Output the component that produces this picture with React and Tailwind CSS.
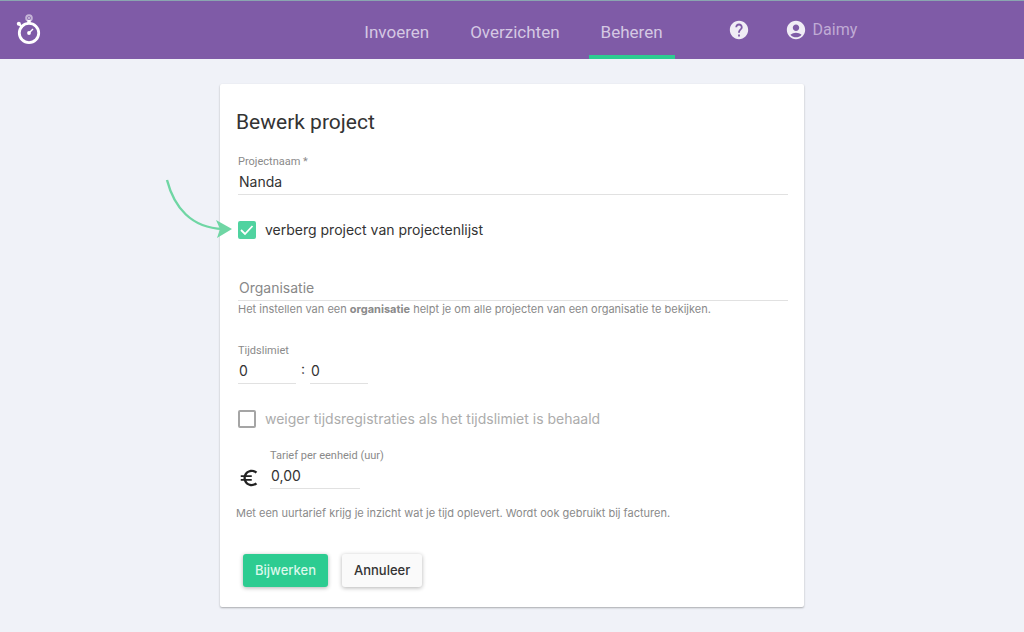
import { useState } from 'react';
import { MdAccountCircle, MdEuroSymbol, MdHelp } from 'react-icons/md';

const navItems = [
  { label: 'Invoeren', active: false },
  { label: 'Overzichten', active: false },
  { label: 'Beheren', active: true },
];

function Logo() {
  return (
    <svg width="26" height="32" viewBox="0 0 26 32" fill="none" aria-hidden="true">
      <circle cx="13" cy="4" r="2.8" stroke="#fff" strokeOpacity="0.55" strokeWidth="2" />
      <circle cx="13" cy="4" r="1" fill="#fff" fillOpacity="0.7" />
      <path d="M13 6v4" stroke="#fff" strokeWidth="3.4" />
      <path d="M3.5 10.5l3 3" stroke="#fff" strokeWidth="2.4" />
      <circle cx="2.800" cy="9.800" r="2" fill="#fff" />
      <circle cx="13" cy="19" r="9.700" stroke="#fff" strokeWidth="2.800" />
      <circle cx="13" cy="19" r="1.900" fill="#fff" />
      <path d="M13 19l4-4" stroke="#fff" strokeWidth="1.500" />
    </svg>
  );
}

function Header() {
  return (
    <header className="flex h-[59px] items-stretch border-t border-[#8aa5b0] bg-[#7f5ba7] font-['Roboto',sans-serif] text-[17px] text-[#d5c8e3]">
      <div className="flex w-1/3 shrink-0 items-center pl-4">
        <a href="#home" aria-label="Home">
          <Logo />
        </a>
      </div>
      <nav className="flex gap-[17px] pl-[11px]">
        {navItems.map((item) => (
          <a
            key={item.label}
            href={`#${item.label.toLowerCase()}`}
            className={`flex items-center border-b-4 px-3 pt-2.5 ${
              item.active ? 'border-[#2dcc91]' : 'border-transparent'
            }`}
          >
            {item.label}
          </a>
        ))}
      </nav>
      <div className="flex items-center gap-[35px] pl-[53px]">
        <a href="#help" aria-label="Help">
          <MdHelp size={22} className="text-[#f0ecf5]" />
        </a>
        <a href="#account" className="flex items-center gap-1.5 text-base text-[#c0abd5]">
          <MdAccountCircle size={22} className="text-[#f0ecf5]" />
          Daimy
        </a>
      </div>
    </header>
  );
}

// Curved pointer towards the "hide project" checkbox
function Arrow() {
  return (
    <svg
      width="70"
      height="62"
      viewBox="0 0 70 62"
      fill="none"
      aria-hidden="true"
      className="absolute -left-[74px] -top-[42px]"
    >
      <path d="M3 2C10 29 27 50 59 51" stroke="#6fd6a4" strokeWidth="2.4" />
      <path d="M68 51L52 42l4 9-3 9z" fill="#6fd6a4" />
    </svg>
  );
}

function Checkbox({ id, label, checked, onChange, disabled }) {
  return (
    <div className="flex h-5 items-center gap-[9px]">
      <span className="relative flex size-[18px]">
        <input
          id={id}
          type="checkbox"
          checked={checked}
          onChange={onChange}
          disabled={disabled}
          className="size-[18px] appearance-none rounded-xs border-2 border-[#a5a5a5] checked:border-[#50d3a0] checked:bg-[#50d3a0]"
        />
        {checked && (
          <svg width="18" height="18" viewBox="0 0 18 18" fill="none" className="pointer-events-none absolute inset-0">
            <path d="M3 9l4 4 7.500-8" stroke="#fff" strokeWidth="1.8" />
          </svg>
        )}
      </span>
      <label htmlFor={id} className={`text-sm leading-5 ${disabled ? 'text-[#acacac]' : 'text-[#333]'}`}>
        {label}
      </label>
    </div>
  );
}

const inputClass =
  'h-[25px] border-b border-[#e1e1e1] bg-transparent px-px pb-0.5 text-sm text-[#333] outline-none placeholder:text-[#888]';
const labelClass = "font-['Roboto',sans-serif] text-[11px] leading-4 text-[#8a8a8a]";
const helpClass = 'text-[11px] leading-4 text-[#8a8a8a]';

export default function App() {
  const [name, setName] = useState('Nanda');
  const [hidden, setHidden] = useState(true);
  const [organisation, setOrganisation] = useState('');
  const [hours, setHours] = useState('0');
  const [minutes, setMinutes] = useState('0');
  const [rate, setRate] = useState('0,00');

  return (
    <div className="min-h-screen bg-[#f0f2f8] font-['Inter',sans-serif]">
      <Header />

      <main className="px-4 pt-[25px] pb-6">
        <form
          onSubmit={(e) => e.preventDefault()}
          className="mx-auto max-w-[584px] rounded-xs bg-white px-4 pt-6 pb-5 shadow-[0_1px_2px_rgba(0,0,0,0.3)]"
        >
          <h1 className="font-['Roboto',sans-serif] text-[21px] leading-7 text-[#333]">Bewerk project</h1>

          <div className="pl-0.5">
            <div className="mt-[18px] flex flex-col">
              <label htmlFor="name" className={labelClass}>Projectnaam *</label>
              <input id="name" value={name} onChange={(e) => setName(e.target.value)} className={inputClass} />
            </div>

            <div className="relative mt-[25px]">
              <Arrow />
              <Checkbox
                id="hidden"
                label="verberg project van projectenlijst"
                checked={hidden}
                onChange={(e) => setHidden(e.target.checked)}
              />
            </div>

            <div className="mt-9 flex flex-col">
              <input
                aria-label="Organisatie"
                placeholder="Organisatie"
                value={organisation}
                onChange={(e) => setOrganisation(e.target.value)}
                className={inputClass}
              />
              <p className={helpClass}>
                Het instellen van een <b>organisatie</b> helpt je om alle projecten van een organisatie te bekijken.
              </p>
            </div>

            <div className="mt-[26px]">
              <label htmlFor="hours" className={`block ${labelClass}`}>Tijdslimiet</label>
              <div className="flex items-start">
                <input id="hours" value={hours} onChange={(e) => setHours(e.target.value)} className={`w-[58px] ${inputClass}`} />
                <span className="w-3.5 text-center text-sm leading-5 text-[#333]">:</span>
                <input aria-label="Minuten" value={minutes} onChange={(e) => setMinutes(e.target.value)} className={`w-[58px] ${inputClass}`} />
              </div>
            </div>

            <div className="mt-[25px]">
              <Checkbox id="refuse" label="weiger tijdsregistraties als het tijdslimiet is behaald" checked={false} disabled />
            </div>

            <div className="mt-[19px] flex items-end gap-2.5">
              <MdEuroSymbol size={22} className="text-[#222]" />
              <div className="flex flex-col">
                <label htmlFor="rate" className={labelClass}>Tarief per eenheid (uur)</label>
                <input id="rate" value={rate} onChange={(e) => setRate(e.target.value)} className={`w-[90px] ${inputClass}`} />
              </div>
            </div>
          </div>

          <p className={`mt-4 ${helpClass}`}>
            Met een uurtarief krijg je inzicht wat je tijd oplevert. Wordt ook gebruikt bij facturen.
          </p>

          <div className="mt-[33px] flex gap-3.5 pl-[7px] text-[13px] font-medium">
            <button type="submit" className="h-[33px] rounded-[3px] bg-[#2dcc91] px-3 text-[#dcf8ec] shadow-[0_1px_4px_rgba(0,0,0,0.3)]">
              Bijwerken
            </button>
            <button type="button" className="h-[33px] rounded-[3px] bg-[#fafafa] px-3 text-[#333] shadow-[0_1px_4px_rgba(0,0,0,0.3)]">
              Annuleer
            </button>
          </div>
        </form>
      </main>
    </div>
  );
}
